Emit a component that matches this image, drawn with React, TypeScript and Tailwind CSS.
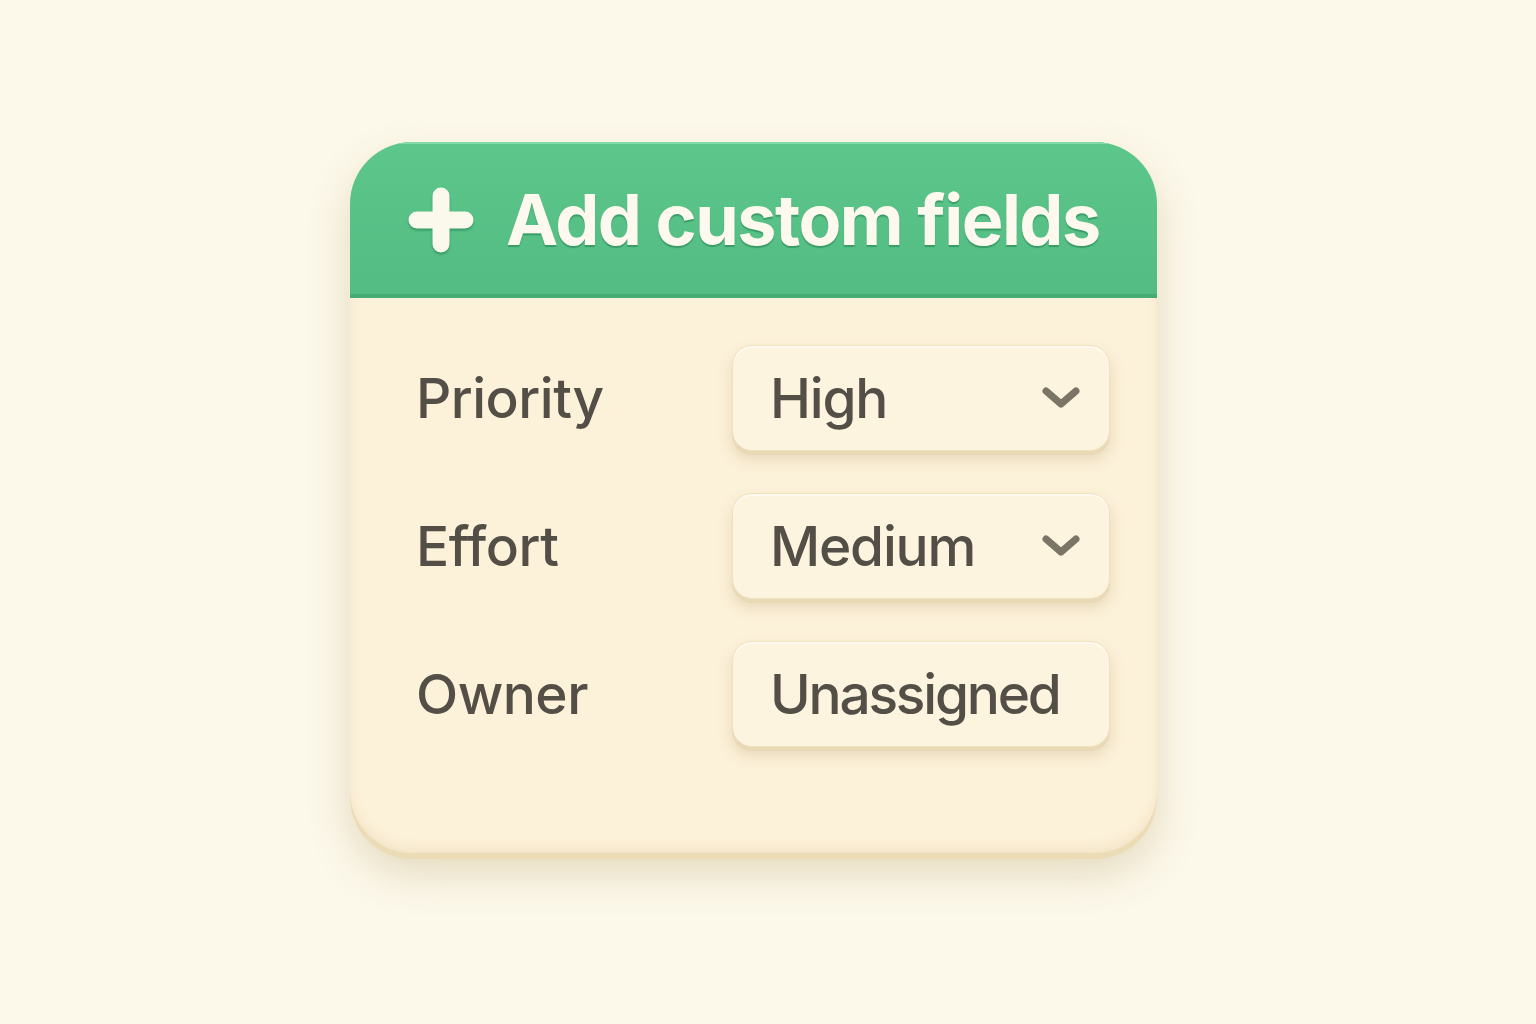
import React from "react";

function Chevron() {
  return (
    <svg width="40" height="24" viewBox="0 0 40 24" fill="none">
      <path d="M5 5 L20 18 L35 5" stroke="#7a7567" strokeWidth="7" strokeLinecap="round" strokeLinejoin="round" />
    </svg>
  );
}

function Field({ label, value, chevron, tight }: { label: string; value: string; chevron?: boolean; tight?: boolean }) {
  return (
    <div className="flex items-center">
      <div className="w-[382px] pl-[66px] text-[55px] font-medium text-[#534f47] leading-none tracking-[-0.5px]">{label}</div>
      <div className="flex h-[106px] w-[378px] items-center justify-between rounded-[20px] border border-[#efe2c2] bg-[#fdf4df] pl-[37px] pr-[28px] shadow-[0_4px_0_#e9d9b4,0_8px_14px_rgba(170,140,80,0.25),inset_0_2px_0_#fffaf0]">
        <span className={tight ? "text-[55px] font-medium text-[#534f47] leading-none tracking-[-2.2px]" : "text-[55px] font-medium text-[#534f47] leading-none tracking-[-1.2px]"}>{value}</span>
        {chevron ? <Chevron /> : null}
      </div>
    </div>
  );
}

export default function App() {
  return (
    <div className="min-h-[1024px] w-full bg-[#fcf8ea] pl-[350px] pt-[142px]" style={{ fontFamily: "Inter, 'Noto Sans', sans-serif" }}>
      <div className="flex h-[711px] w-[807px] flex-col overflow-hidden rounded-[62px] bg-[#fcf1d9] shadow-[0_6px_0_#ecdcb6,0_20px_40px_rgba(170,140,80,0.28),inset_0_-6px_10px_rgba(200,170,110,0.15)]">
        <div className="flex h-[156px] items-center gap-[31px] bg-gradient-to-b from-[#5dc68b] to-[#52bc82] pl-[57px] shadow-[inset_0_2px_0_#82dba6,inset_0_-4px_0_#45ad73]">
          <svg width="68" height="66" viewBox="0 0 68 66" fill="none" className="drop-shadow-[0_2px_1px_rgba(0,80,40,0.35)]">
            <path d="M34 9 V57 M10 33 H58" stroke="#fbf8ec" strokeWidth="17" strokeLinecap="round" />
          </svg>
          <span className="text-[70px] font-bold leading-none tracking-[-1.5px] text-[#fdf9ee] [text-shadow:0_2px_1px_rgba(0,90,45,0.35)]">Add custom fields</span>
        </div>
        <div className="flex flex-col gap-[42px] pt-[47px]">
          <Field label="Priority" value="High" chevron />
          <Field label="Effort" value="Medium" chevron />
          <Field label="Owner" value="Unassigned" tight />
        </div>
      </div>
    </div>
  );
}
